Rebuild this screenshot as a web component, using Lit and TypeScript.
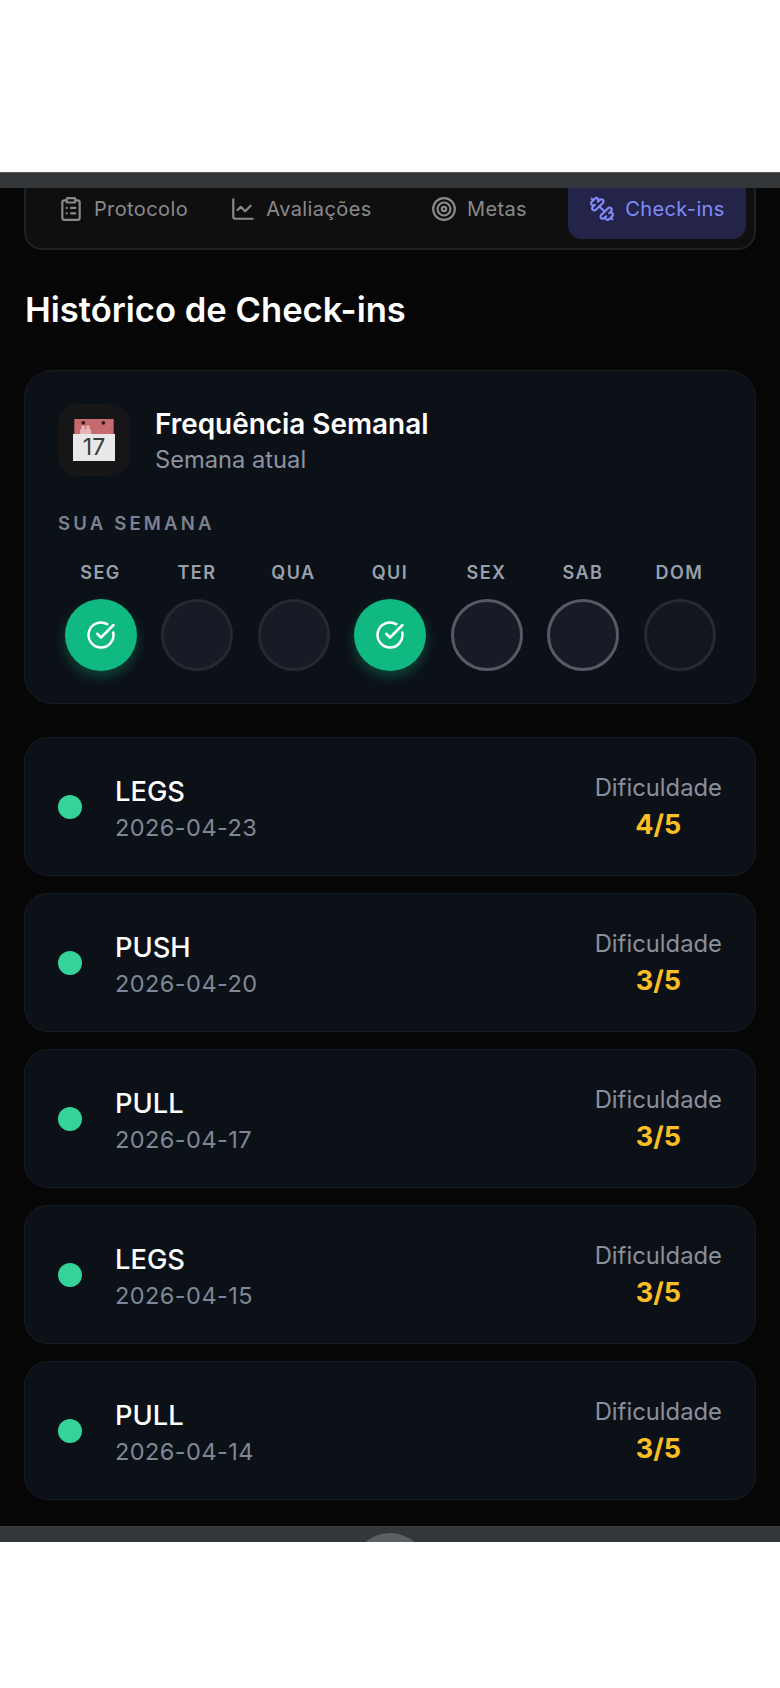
import { LitElement, html, css, svg } from 'lit';
import { customElement } from 'lit/decorators.js';

const icon = (body: unknown, size = 26) => html`
  <svg width=${size} height=${size} viewBox="0 0 24 24" fill="none" stroke="currentColor"
       stroke-width="2" stroke-linecap="round" stroke-linejoin="round">${body}</svg>`;

const ICONS = {
  clipboard: svg`<rect x="8" y="2" width="8" height="4" rx="1"/>
    <path d="M16 4h2a2 2 0 0 1 2 2v14a2 2 0 0 1-2 2H6a2 2 0 0 1-2-2V6a2 2 0 0 1 2-2h2"/>
    <path d="M12 11h4"/><path d="M12 16h4"/><path d="M8 11h.01"/><path d="M8 16h.01"/>`,
  chart: svg`<path d="M3 3v16a2 2 0 0 0 2 2h16"/><path d="m19 9-5 5-4-4-3 3"/>`,
  target: svg`<circle cx="12" cy="12" r="10"/><circle cx="12" cy="12" r="6"/><circle cx="12" cy="12" r="2"/>`,
  dumbbell: svg`<path d="M14.4 14.4 9.6 9.6"/>
    <path d="M18.657 21.485a2 2 0 1 1-2.829-2.828l-1.767 1.768a2 2 0 1 1-2.829-2.829l6.364-6.364a2 2 0 1 1 2.829 2.829l-1.768 1.767a2 2 0 1 1 2.828 2.829z"/>
    <path d="m21.5 21.5-1.4-1.4"/><path d="M3.9 3.9 2.5 2.5"/>
    <path d="M6.404 12.768a2 2 0 1 1-2.829-2.829l1.768-1.767a2 2 0 1 1-2.828-2.829l2.828-2.828a2 2 0 1 1 2.829 2.828l1.767-1.768a2 2 0 1 1 2.829 2.829z"/>`,
  check: svg`<path d="M21.801 10A10 10 0 1 1 17 3.335"/><path d="m9 11 3 3L22 4"/>`,
};

const TABS = [
  { label: 'Protocolo', icon: ICONS.clipboard },
  { label: 'Avaliações', icon: ICONS.chart },
  { label: 'Metas', icon: ICONS.target },
  { label: 'Check-ins', icon: ICONS.dumbbell, active: true },
];

const DAYS = [
  { label: 'SEG', state: 'done' },
  { label: 'TER', state: 'past' },
  { label: 'QUA', state: 'past' },
  { label: 'QUI', state: 'done' },
  { label: 'SEX', state: 'next' },
  { label: 'SAB', state: 'next' },
  { label: 'DOM', state: 'rest' },
];

const CHECKINS = [
  { name: 'LEGS', date: '2026-04-23', level: '4/5' },
  { name: 'PUSH', date: '2026-04-20', level: '3/5' },
  { name: 'PULL', date: '2026-04-17', level: '3/5' },
  { name: 'LEGS', date: '2026-04-15', level: '3/5' },
  { name: 'PULL', date: '2026-04-14', level: '3/5' },
];

@customElement('app-root')
export class AppRoot extends LitElement {
  static styles = css`
    :host {
      display: block;
      height: 1688px;
      padding-top: 172px;
      box-sizing: border-box;
      background: #fff;
      font-family: Inter, "Liberation Sans", sans-serif;
    }
    .bar {
      height: 15px;
      background: #33373a;
      border-top: 1px solid #55595c;
    }
    .bar.bottom {
      position: relative;
      height: 16px;
      border-top: 1px solid #3c4043;
      box-sizing: border-box;
      overflow: hidden;
    }
    .handle {
      position: absolute;
      left: 352px;
      top: 6px;
      width: 76px;
      height: 76px;
      border-radius: 50%;
      background: #5c6064;
    }
    .screen {
      height: 1338px;
      padding: 0 24px;
      background: #060606;
      box-sizing: border-box;
    }
    .tabs {
      display: grid;
      grid-template-columns: repeat(4, 1fr);
      height: 62px;
      padding: 0 8px 9px;
      box-sizing: border-box;
      background: #0f0f10;
      border: 2px solid #1d2025;
      border-top: none;
      border-radius: 0 0 18px 18px;
    }
    .tab {
      display: flex;
      align-items: center;
      justify-content: center;
      gap: 10px;
      padding-bottom: 9px;
      color: #8a8a8a;
      font-size: 20px;
      letter-spacing: 0.4px;
      border-radius: 0 0 14px 14px;
    }
    .tab.active {
      color: #818cf8;
      background: #24244a;
    }
    h1 {
      margin: 34px 0 36px 1px;
      color: #fff;
      font-size: 34.6px;
      line-height: 50px;
      font-weight: 600;
    }
    .card {
      background: #0c1118;
      border: 1px solid #171c25;
      border-radius: 28px;
    }
    .week {
      padding: 33px 33px 32px;
    }
    .head {
      display: flex;
      gap: 25px;
    }
    .cal-box {
      display: flex;
      align-items: center;
      justify-content: center;
      width: 72px;
      height: 72px;
      border-radius: 20px;
      background: #161618;
    }
    .cal {
      width: 42px;
      height: 42px;
      display: flex;
      flex-direction: column;
    }
    .cal svg {
      display: block;
    }
    .cal-day {
      flex: 1;
      text-align: center;
      background: #e8e8e8;
      color: #3a3a3a;
      font-size: 23px;
      line-height: 27px;
    }
    .head-text {
      padding-top: 1px;
    }
    .head-title {
      color: #fff;
      font-size: 27.9px;
      line-height: 38px;
      font-weight: 600;
    }
    .head-sub {
      color: #8b93a1;
      font-size: 23.7px;
      line-height: 33px;
    }
    .week-label {
      margin-top: 31px;
      color: #7c8190;
      font-size: 18.5px;
      line-height: 32px;
      font-weight: 600;
      letter-spacing: 3.2px;
    }
    .days {
      display: grid;
      grid-template-columns: repeat(7, 96.5px);
      justify-content: center;
      margin: 18px -6px 0;
    }
    .day {
      display: flex;
      flex-direction: column;
      align-items: center;
      gap: 10px;
    }
    .day-label {
      color: #9aa0ab;
      font-size: 18px;
      line-height: 32px;
      font-weight: 600;
      letter-spacing: 1.5px;
    }
    .dot {
      display: flex;
      align-items: center;
      justify-content: center;
      width: 72px;
      height: 72px;
      box-sizing: border-box;
      border-radius: 50%;
      background: #161b26;
      border: 3px solid #26282d;
      color: #fff;
    }
    .dot.done {
      background: #10b981;
      border: none;
      box-shadow: 0 6px 12px rgba(16, 185, 129, 0.3);
    }
    .dot.next { border-color: #555a66; }
    .dot.rest { border-color: #252a35; background: #11161f; }
    .list {
      display: flex;
      flex-direction: column;
      gap: 17px;
      margin-top: 33px;
    }
    .row {
      display: flex;
      align-items: center;
      height: 139px;
      padding: 0 33px;
      box-sizing: border-box;
      border-radius: 24px;
    }
    .status {
      width: 24px;
      height: 24px;
      margin-right: 33px;
      border-radius: 50%;
      background: #34d399;
    }
    .info {
      flex: 1;
      padding-top: 6px;
    }
    .name {
      color: #fff;
      font-size: 27.3px;
      line-height: 36px;
      font-weight: 500;
    }
    .date {
      color: #7f8794;
      font-size: 23.5px;
      line-height: 36px;
      letter-spacing: 0.45px;
    }
    .score {
      text-align: center;
    }
    .score-label {
      color: #8b8f9a;
      font-size: 23.8px;
      line-height: 35px;
    }
    .score-value {
      color: #fbbf24;
      font-size: 27px;
      line-height: 39px;
      font-weight: 700;
    }
  `;

  render() {
    return html`
      <div class="bar"></div>
      <div class="screen">
        <nav class="tabs">
          ${TABS.map((t) => html`
            <div class="tab ${t.active ? 'active' : ''}">${icon(t.icon)}<span>${t.label}</span></div>
          `)}
        </nav>
        <h1>Histórico de Check-ins</h1>
        <section class="card week">
          <div class="head">
            <div class="cal-box">
              <div class="cal">
                <svg width="42" height="16" viewBox="0 0 42 16">
                  <rect width="42" height="16" fill="#c76a6d"/>
                  <circle cx="9.5" cy="4" r="2" fill="#2a1a1a"/>
                  <circle cx="31" cy="4" r="2" fill="#2a1a1a"/>
                  <path d="M6 16v-3a3 3 0 0 1 2-3 2 2 0 1 1 3 0 3 3 0 0 1 1 1 3 3 0 0 1 1-1 2 2 0 1 1 3 0 3 3 0 0 1 2 3v3z" fill="#e6b4b4"/>
                </svg>
                <div class="cal-day">17</div>
              </div>
            </div>
            <div class="head-text">
              <div class="head-title">Frequência Semanal</div>
              <div class="head-sub">Semana atual</div>
            </div>
          </div>
          <div class="week-label">SUA SEMANA</div>
          <div class="days">
            ${DAYS.map((d) => html`
              <div class="day">
                <div class="day-label">${d.label}</div>
                <div class="dot ${d.state}">${d.state === 'done' ? icon(ICONS.check, 30) : ''}</div>
              </div>
            `)}
          </div>
        </section>
        <div class="list">
          ${CHECKINS.map((c) => html`
            <div class="card row">
              <div class="status"></div>
              <div class="info">
                <div class="name">${c.name}</div>
                <div class="date">${c.date}</div>
              </div>
              <div class="score">
                <div class="score-label">Dificuldade</div>
                <div class="score-value">${c.level}</div>
              </div>
            </div>
          `)}
        </div>
      </div>
      <div class="bar bottom"><div class="handle"></div></div>
    `;
  }
}
